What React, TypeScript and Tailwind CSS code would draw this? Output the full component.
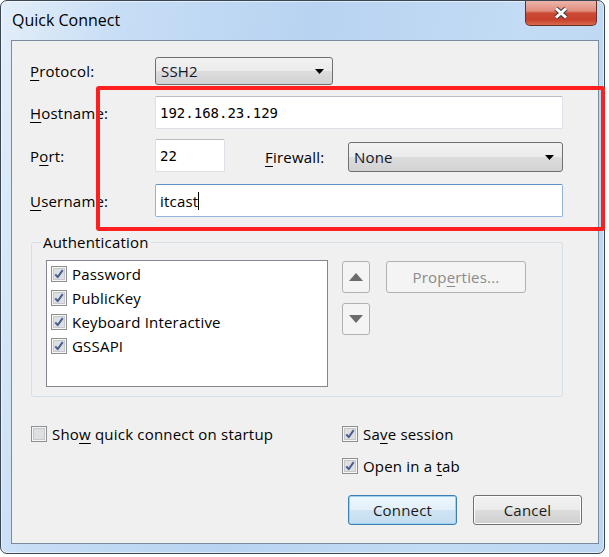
import type { ReactNode } from 'react'

const Mn = ({ children }: { children: ReactNode }) => (
  <span className="underline decoration-1 underline-offset-[3px]">{children}</span>
)

const CheckBox = ({ checked = false }: { checked?: boolean }) => (
  <svg width="16" height="16" viewBox="0 0 16 16" className="shrink-0">
    <rect x="0.5" y="0.5" width="15" height="15" fill="#f6f6f6" stroke="#8e8f8f" />
    <rect x="2.5" y="2.5" width="11" height="11" fill="#dedfe1" stroke="#c4c7cb" />
    {checked && (
      <path
        d="M4.3 8.3 L6.7 11.2 L11.7 4.2"
        fill="none"
        stroke="#4b5e92"
        strokeWidth="2"
        strokeLinejoin="round"
      />
    )}
  </svg>
)

const Combo = ({ value, className = '' }: { value: string; className?: string }) => (
  <div
    className={`flex items-center justify-between pl-[5px] pr-[8px] border border-[#707070] rounded-[3px] bg-[linear-gradient(to_bottom,#f2f2f2_0%,#ebebeb_50%,#dddddd_50%,#d2d2d2_100%)] text-[#10182a] ${className}`}
  >
    <span>{value}</span>
    <svg width="9" height="5" viewBox="0 0 9 5">
      <path d="M0 0H9L4.5 5Z" fill="#000" />
    </svg>
  </div>
)

const TextBox = ({
  children,
  className = '',
  focused = false,
}: {
  children?: ReactNode
  className?: string
  focused?: boolean
}) => (
  <div
    className={`flex items-center h-[33px] pl-[4px] bg-white rounded-[2px] border ${
      focused
        ? 'border-[#8fb6da] border-t-[#5c93c4]'
        : 'border-[#dde1e7] border-t-[#b9bcc3]'
    } ${className}`}
  >
    {children}
  </div>
)

const Button = ({
  children,
  primary = false,
  className = '',
}: {
  children: ReactNode
  primary?: boolean
  className?: string
}) => (
  <div
    className={`flex items-center justify-center h-[30px] w-[109px] rounded-[3px] border text-[#1b1b1b] ${
      primary
        ? 'border-[#3c7fb1] shadow-[inset_0_0_0_1px_#9fd2f0] bg-[linear-gradient(to_bottom,#eef7fd_0%,#e2f0fa_50%,#cfe5f5_50%,#c3ddf0_100%)]'
        : 'border-[#707070] shadow-[inset_0_0_0_1px_#fcfcfc] bg-[linear-gradient(to_bottom,#f2f2f2_0%,#ebebeb_50%,#dddddd_50%,#cfcfcf_100%)]'
    } ${className}`}
  >
    {children}
  </div>
)

const ArrowButton = ({ up }: { up?: boolean }) => (
  <div className="flex items-center justify-center w-[28px] h-[32px] rounded-[3px] border border-[#adb2b5] bg-[#f4f4f4]">
    <svg width="14" height="8" viewBox="0 0 14 8">
      <path d={up ? 'M0 8H14L7 0Z' : 'M0 0H14L7 8Z'} fill="#6b6b6b" />
    </svg>
  </div>
)

const AUTH_METHODS = ['Password', 'PublicKey', 'Keyboard Interactive', 'GSSAPI']

export default function App() {
  return (
    <div className="relative w-[609px] h-[557px] bg-white text-[15px] leading-[20px] tracking-[0.2px] text-black font-['Open_Sans',sans-serif]">
      {/* window frame */}
      <div className="flex flex-col w-[605px] h-[554px] rounded-[7px] border border-[#3a4653] shadow-[inset_0_0_0_1px_rgba(255,255,255,0.55)] bg-[linear-gradient(100deg,#e3eef9_0%,#c6ddf5_18%,#b8d3f1_45%,#c3dbf4_75%,#bcd6f2_100%)]">
        <div className="flex items-start justify-between h-[39px] pl-[11px]">
          <span className="mt-[8px] text-[16px] leading-[22px] tracking-normal text-black">Quick Connect</span>
          <div className="flex items-center justify-center w-[72px] h-[25px] mr-[7px] rounded-b-[5px] border border-t-0 border-[#6b2e27] bg-[linear-gradient(to_bottom,#ecb6aa_0%,#e08b7c_42%,#cc4a36_50%,#c7412d_78%,#d9694f_100%)]">
            <svg width="18" height="14" viewBox="0 0 18 14">
              <path d="M4 2.5 L14 11.5 M14 2.5 L4 11.5" stroke="#3b3b3b" strokeWidth="5" />
              <path d="M4 2.5 L14 11.5 M14 2.5 L4 11.5" stroke="#ffffff" strokeWidth="3" />
            </svg>
          </div>
        </div>

        {/* client area */}
        <div className="ml-[10px] w-[588px] h-[504px] border border-[#7b8b9e] bg-[#f0f0f0]">
          <div className="pt-[16px] pl-[18px]">
            <div className="flex items-center h-[28px]">
              <span className="w-[125px]">
                <Mn>P</Mn>rotocol:
              </span>
              <Combo value="SSH2" className="w-[178px] h-[28px]" />
            </div>
            <div className="flex items-center mt-[11px]">
              <span className="w-[125px]">
                <Mn>H</Mn>ostname:
              </span>
              <TextBox className="w-[408px]">
                <span className="font-['DejaVu_Sans_Mono',monospace] text-[14px] tracking-normal">192.168.23.129</span>
              </TextBox>
            </div>
            <div className="flex items-center mt-[10px]">
              <span className="w-[125px]">
                P<Mn>o</Mn>rt:
              </span>
              <TextBox className="w-[70px]">
                <span className="font-['DejaVu_Sans_Mono',monospace] text-[14px] tracking-normal">22</span>
              </TextBox>
              <span className="w-[83px] ml-[40px] mt-[3px]">
                <Mn>F</Mn>irewall:
              </span>
              <Combo value="None" className="w-[215px] h-[30px] mt-[3px]" />
            </div>
            <div className="flex items-center mt-[12px]">
              <span className="w-[125px]">
                <Mn>U</Mn>sername:
              </span>
              <TextBox focused className="w-[408px]">
                <span>itcast</span>
                <span className="w-px h-[18px] bg-black" />
              </TextBox>
            </div>
          </div>

          {/* authentication group */}
          <fieldset className="ml-[19px] mt-[17px] w-[532px] pb-[9px] rounded-[3px] border border-[#d5dfe5]">
            <legend className="ml-[9px] px-[2px] leading-[16px]">Authentication</legend>
            <div className="flex items-start mt-[10px] ml-[14px]">
              <div className="w-[282px] h-[127px] pt-[1px] pl-[4px] border border-[#828790] bg-white">
                {AUTH_METHODS.map((m) => (
                  <div key={m} className="flex items-center gap-[5px] h-[24px]">
                    <CheckBox checked />
                    <span>{m}</span>
                  </div>
                ))}
              </div>
              <div className="flex flex-col gap-[10px] ml-[14px] mt-[1px]">
                <ArrowButton up />
                <ArrowButton />
              </div>
              <div className="flex items-center justify-center ml-[16px] mt-[1px] w-[140px] h-[32px] rounded-[3px] border border-[#adb2b5] bg-[#f4f4f4] text-[#8a8a8a]">
                Prop<Mn>e</Mn>rties...
              </div>
            </div>
          </fieldset>

          {/* options and buttons */}
          <div className="flex items-start mt-[29px] pl-[19px]">
            <div className="flex items-center gap-[5px] w-[311px] h-[16px]">
              <CheckBox />
              <span>
                Sho<Mn>w</Mn> quick connect on startup
              </span>
            </div>
            <div className="flex flex-col">
              <div className="flex items-center gap-[5px] h-[16px]">
                <CheckBox checked />
                <span>
                  Sa<Mn>v</Mn>e session
                </span>
              </div>
              <div className="flex items-center gap-[5px] h-[16px] mt-[16px]">
                <CheckBox checked />
                <span>
                  Open in a <Mn>t</Mn>ab
                </span>
              </div>
              <div className="flex gap-[16px] mt-[21px] ml-[6px]">
                <Button primary>Connect</Button>
                <Button>Cancel</Button>
              </div>
            </div>
          </div>
        </div>
      </div>

      {/* red highlight annotation */}
      <div className="absolute left-[96px] top-[86px] w-[509px] h-[145px] rounded-[3px] border-4 border-[#ff1f1f]" />
    </div>
  )
}
